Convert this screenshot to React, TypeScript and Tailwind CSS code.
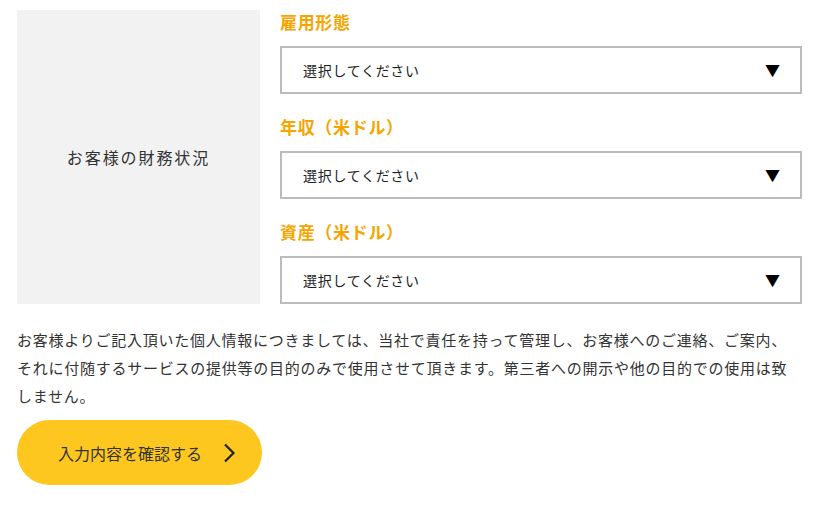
import React from 'react';

const font = { fontFamily: '"Noto Sans CJK JP", "Noto Sans", sans-serif' };

interface SelectFieldProps {
    label: string;
    last?: boolean;
}

const SelectField: React.FC<SelectFieldProps> = ({ label, last = false }) => {
    return (
        <div className={last ? '' : 'mb-[21px]'}>
            <div className="h-6 mb-3 text-[17px] leading-6 font-bold tracking-[0.04em] text-[#f6a500]">{label}</div>
            <div className="h-12 flex items-center justify-between border-2 border-[#bbbbbb] bg-white pl-[21px] pr-[20px]">
                <span className="text-[14px] tracking-[0.05em] text-[#222]">選択してください</span>
                <span className="text-[15px] text-black">▼</span>
            </div>
        </div>
    );
};

export default function App() {
    return (
        <div className="w-[830px] h-[506px] bg-white pt-[10px] px-[17px] text-[#333]" style={font}>
            <div className="flex gap-5">
                <div className="w-[243px] bg-[#f2f2f2] flex items-center justify-center">
                    <span className="text-[16px] tracking-[0.12em] text-[#333]">お客様の財務状況</span>
                </div>
                <div className="w-[522px]">
                    <SelectField label="雇用形態" />
                    <SelectField label="年収（米ドル）" />
                    <SelectField label="資産（米ドル）" last />
                </div>
            </div>

            <p className="mt-[22px] text-[15px] leading-[28px] tracking-[0.05em] text-[#333] whitespace-nowrap">
                お客様よりご記入頂いた個人情報につきましては、当社で責任を持って管理し、お客様へのご連絡、ご案内、<br />
                それに付随するサービスの提供等の目的のみで使用させて頂きます。第三者への開示や他の目的での使用は致<br />
                しません。
            </p>

            <button className="mt-[10px] w-[245px] h-[65px] rounded-full bg-[#fdc71f] flex items-center pl-[41px] gap-[20px]">
                <span className="text-[16px] text-[#333]">入力内容を確認する</span>
                <svg width="14" height="20" viewBox="0 0 14 20" fill="none">
                    <path d="M3 1.5 L11.5 10 L3 18.5" stroke="#222" strokeWidth="2.2" />
                </svg>
            </button>
        </div>
    );
}
